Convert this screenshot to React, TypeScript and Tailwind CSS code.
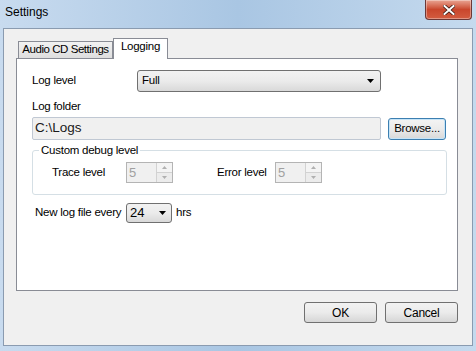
import React from "react"

function Caret() {
  return (
    <svg width="7" height="4" viewBox="0 0 7 4" className="shrink-0">
      <path d="M0 0H7L3.5 4Z" fill="#000" />
    </svg>
  )
}

function Spin({ value }: { value: string }) {
  return (
    <div className="flex h-[21px] w-[47px] border border-[#b4b4b4] bg-[#f0f0f0]">
      <div className="flex-1 pl-[2px] text-[13px] leading-[19px] text-[#a0a0a0]">{value}</div>
      <div className="flex w-[16px] flex-col border-l border-[#d2d2d2]">
        <div className="flex flex-1 items-center justify-center border-b border-[#d2d2d2] bg-[#f4f4f4]">
          <svg width="5" height="3" viewBox="0 0 5 3">
            <path d="M0 3H5L2.5 0Z" fill="#b0b0b0" />
          </svg>
        </div>
        <div className="flex flex-1 items-center justify-center bg-[#ececec]">
          <svg width="5" height="3" viewBox="0 0 5 3">
            <path d="M0 0H5L2.5 3Z" fill="#b0b0b0" />
          </svg>
        </div>
      </div>
    </div>
  )
}

export default function App() {
  return (
    <div
      className="relative h-[351px] w-[476px] overflow-hidden bg-gradient-to-r from-[#c8dbef] via-[#a9c6e3] to-[#c5daee] text-[11.5px] tracking-[-0.25px] text-black"
      style={{ fontFamily: '"Liberation Sans", Arial, sans-serif' }}
    >
      {/* barra de título */}
      <div className="flex h-[28px] items-start justify-between pl-[5px]">
        <span className="pt-[4px] text-[12px] leading-[16px] tracking-normal">Settings</span>
        <button className="mr-[4px] flex h-[20px] w-[47px] items-center justify-center rounded-b-[4px] border border-t-0 border-[#6c3836] bg-gradient-to-b from-[#e8a493] via-[#c9462c] to-[#d35c40] shadow-[inset_0_0_0_1px_rgba(255,255,255,0.35)]">
          <svg width="12" height="10" viewBox="0 0 12 10">
            <path d="M1.5 1L10.5 9M10.5 1L1.5 9" stroke="#3d1a14" strokeWidth="3.6" strokeLinecap="square" />
            <path d="M1.5 1L10.5 9M10.5 1L1.5 9" stroke="#fff" strokeWidth="2" strokeLinecap="square" />
          </svg>
        </button>
      </div>

      {/* área do cliente */}
      <div className="mx-[3px] h-[318px] border border-[#8a9bb0] bg-[#f0f0f0]">
        <div className="px-[12px] pt-[8px]">
          {/* abas */}
          <div className="flex h-[21px] items-end pl-[2px]">
            <div className="flex h-[17px] w-[95px] items-center justify-center whitespace-nowrap border border-b-0 border-[#898c95] bg-gradient-to-b from-[#f2f2f2] to-[#dedede] leading-none tracking-[-0.45px]">
              Audio CD Settings
            </div>
            <div className="relative -mb-px flex h-[21px] w-[55px] items-center justify-center border border-b-0 border-[#898c95] bg-white pb-[4px] leading-none">
              Logging
            </div>
          </div>

          {/* painel */}
          <div className="h-[233px] w-[442px] border border-[#898c95] bg-white pl-[15px] pr-[10px] pt-[11px]">
            <div className="flex h-[22px] items-center">
              <span className="w-[105px]">Log level</span>
              <div className="flex h-[22px] w-[244px] items-center justify-between rounded-[3px] border border-[#707070] bg-gradient-to-b from-[#f2f2f2] via-[#ebebeb] to-[#d9d9d9] pl-[4px] pr-[6px]">
                <span>Full</span>
                <Caret />
              </div>
            </div>

            <div className="mt-[6px] leading-[16px]">Log folder</div>

            <div className="mt-[3px] flex items-center">
              <div className="flex h-[23px] w-[349px] items-center rounded-[2px] border border-[#c0c8d3] bg-[#f0f0f0] pl-[2px] text-[13.5px] tracking-normal text-[#1a1a1a]">
                C:\Logs
              </div>
              <button className="ml-[7px] h-[22px] w-[58px] rounded-[3px] border border-[#3c7fb1] bg-gradient-to-b from-[#f4f4f4] via-[#ebebeb] to-[#d8d8d8] text-[11.5px] leading-none shadow-[inset_0_0_0_1px_#c6e4f7]">
                Browse...
              </button>
            </div>

            {/* grupo */}
            <div className="relative mt-[10px] h-[45px] w-[415px] rounded-[3px] border border-[#d5dfe5]">
              <span className="absolute -top-[9px] left-[6px] bg-white px-[2px] leading-[16px]">
                Custom debug level
              </span>
              <div className="flex items-center pl-[19px] pt-[11px]">
                <span className="w-[74px]">Trace level</span>
                <Spin value="5" />
                <span className="ml-[44px] w-[58px]">Error level</span>
                <Spin value="5" />
              </div>
            </div>

            <div className="mt-[8px] flex items-center pl-[3px]">
              <span className="w-[91px] whitespace-nowrap">New log file every</span>
              <div className="flex h-[20px] w-[46px] items-center justify-between rounded-[3px] border border-[#707070] bg-gradient-to-b from-[#f2f2f2] via-[#ebebeb] to-[#d9d9d9] pl-[3px] pr-[5px] text-[13px] tracking-normal">
                <span>24</span>
                <Caret />
              </div>
              <span className="ml-[4px]">hrs</span>
            </div>
          </div>

          {/* botões */}
          <div className="mt-[11px] flex justify-end gap-[8px] pr-[2px]">
            <button className="h-[21px] w-[73px] rounded-[3px] border border-[#707070] bg-gradient-to-b from-[#f2f2f2] via-[#ebebeb] to-[#d6d6d6] text-[12px] leading-none">
              OK
            </button>
            <button className="h-[21px] w-[73px] rounded-[3px] border border-[#707070] bg-gradient-to-b from-[#f2f2f2] via-[#ebebeb] to-[#d6d6d6] text-[12px] leading-none">
              Cancel
            </button>
          </div>
        </div>
      </div>
    </div>
  )
}
